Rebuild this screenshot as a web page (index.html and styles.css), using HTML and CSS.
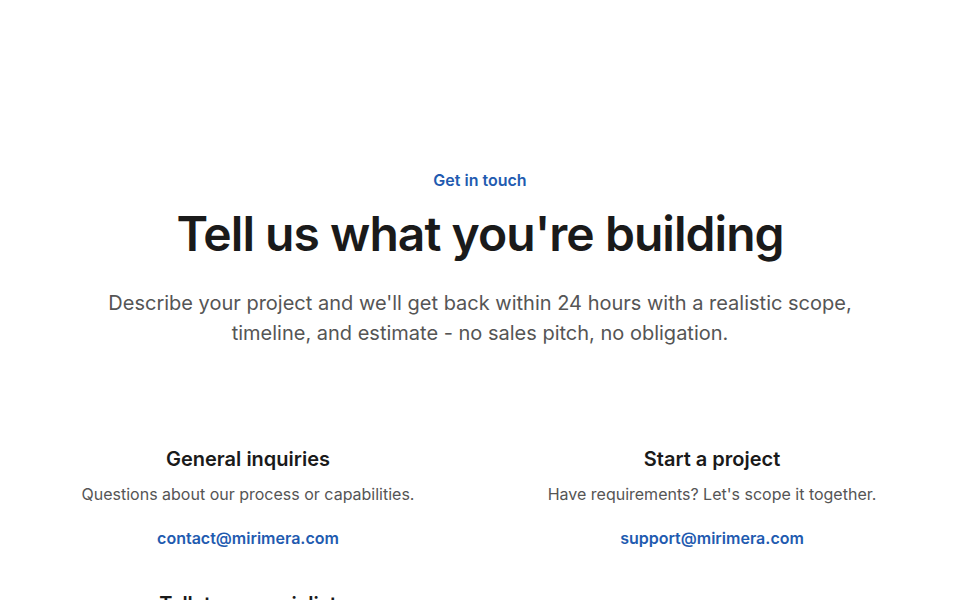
FILE: index.html
```html
<!DOCTYPE html>
<html lang="en">
<head>
<meta charset="utf-8">
<title>Contact</title>
<link rel="stylesheet" href="styles.css">
</head>
<body>
<main class="contact">
  <header class="hero">
    <p class="eyebrow">Get in touch</p>
    <h1 class="title">Tell us what you're building</h1>
    <p class="lead">Describe your project and we'll get back within 24 hours with a realistic scope, timeline, and estimate - no sales pitch, no obligation.</p>
  </header>
  <section class="channels">
    <div class="channel">
      <h2 class="channel-title">General inquiries</h2>
      <p class="channel-desc">Questions about our process or capabilities.</p>
      <a class="channel-link" href="#">contact@mirimera.com</a>
    </div>
    <div class="channel">
      <h2 class="channel-title">Start a project</h2>
      <p class="channel-desc">Have requirements? Let's scope it together.</p>
      <a class="channel-link" href="#">support@mirimera.com</a>
    </div>
    <div class="channel">
      <h2 class="channel-title">Talk to a specialist</h2>
      <p class="channel-desc">Book a call with one of our engineers.</p>
      <a class="channel-link" href="#">hello@mirimera.com</a>
    </div>
  </section>
</main>
</body>
</html>
```

FILE: styles.css
```css
html, body {
  margin: 0;
  padding: 0;
  background: #ffffff;
}
body {
  font-family: Inter, "Noto Sans", "Liberation Sans", sans-serif;
  color: #1a1a1a;
}
.contact {
  max-width: 928px;
  margin: 0 auto;
  padding: 168px 16px 80px;
}
.hero {
  text-align: center;
}
.eyebrow {
  margin: 0;
  font-size: 16px;
  line-height: 24px;
  font-weight: 600;
  color: #1f5bb0;
}
.title {
  margin: 13px 0 0;
  font-size: 48px;
  line-height: 58px;
  font-weight: 600;
  letter-spacing: -0.02em;
  color: #1a1a1a;
}
.lead {
  margin: 25px auto 0;
  max-width: 760px;
  font-size: 20px;
  line-height: 30px;
  color: #555555;
}
.channels {
  margin-top: 97px;
  display: grid;
  grid-template-columns: 1fr 1fr;
  row-gap: 40px;
  text-align: center;
}
.channel {
  display: flex;
  flex-direction: column;
  align-items: center;
}
.channel-title {
  margin: 0;
  font-size: 20px;
  line-height: 28px;
  font-weight: 600;
  color: #1a1a1a;
}
.channel-desc {
  margin: 9px 0 0;
  font-size: 16px;
  line-height: 24px;
  color: #555555;
}
.channel-link {
  margin-top: 20px;
  font-size: 16px;
  line-height: 24px;
  font-weight: 600;
  color: #1f5bb0;
  text-decoration: none;
}
```
